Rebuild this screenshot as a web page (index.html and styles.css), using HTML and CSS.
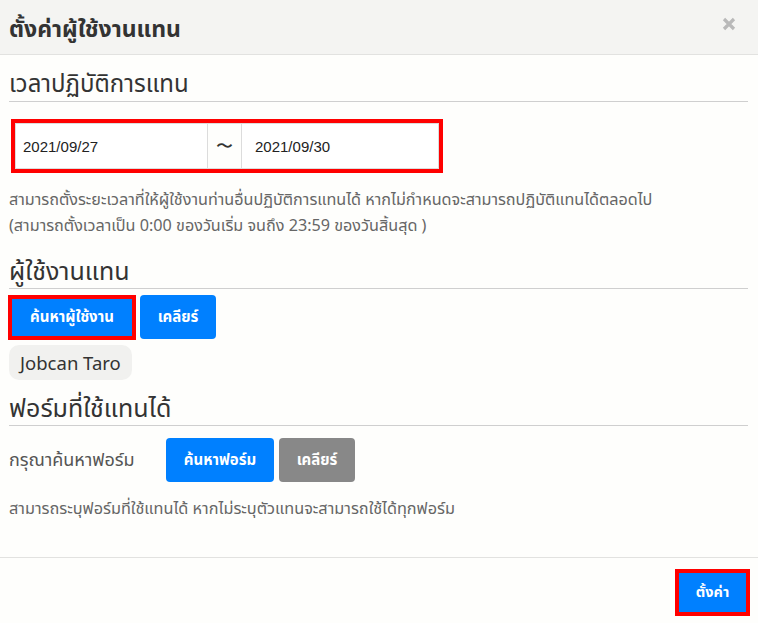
FILE: index.html
```html
<!DOCTYPE html>
<html lang="th">
<head>
<meta charset="utf-8">
<title>ตั้งค่าผู้ใช้งานแทน</title>
<link rel="stylesheet" href="styles.css">
</head>
<body>
<div class="modal">
  <div class="modal-header">
    <h1 class="modal-title">ตั้งค่าผู้ใช้งานแทน</h1>
    <span class="close" aria-label="close">
      <svg width="14" height="14" viewBox="0 0 14 14"><path d="M2 2 L12 12 M12 2 L2 12" stroke="#b9b9b9" stroke-width="3.2" stroke-linecap="butt"/></svg>
    </span>
  </div>
  <div class="modal-body">
    <h2 class="section-title first">เวลาปฏิบัติการแทน</h2>
    <div class="date-group highlight">
      <div class="date-input date-start">2021/09/27</div>
      <div class="date-addon">〜</div>
      <div class="date-input date-end">2021/09/30</div>
    </div>
    <p class="help">สามารถตั้งระยะเวลาที่ให้ผู้ใช้งานท่านอื่นปฏิบัติการแทนได้ หากไม่กำหนดจะสามารถปฏิบัติแทนได้ตลอดไป<br>(สามารถตั้งเวลาเป็น 0:00 ของวันเริ่ม จนถึง 23:59 ของวันสิ้นสุด )</p>

    <h2 class="section-title second">ผู้ใช้งานแทน</h2>
    <div class="btn-row">
      <button class="btn btn-primary btn-user highlight-in">ค้นหาผู้ใช้งาน</button>
      <button class="btn btn-primary btn-clear">เคลียร์</button>
    </div>
    <div class="chip">Jobcan Taro</div>

    <h2 class="section-title third">ฟอร์มที่ใช้แทนได้</h2>
    <div class="form-row">
      <span class="form-label">กรุณาค้นหาฟอร์ม</span>
      <button class="btn btn-primary btn-form">ค้นหาฟอร์ม</button>
      <button class="btn btn-gray btn-clear">เคลียร์</button>
    </div>
    <p class="help single">สามารถระบุฟอร์มที่ใช้แทนได้ หากไม่ระบุตัวแทนจะสามารถใช้ได้ทุกฟอร์ม</p>
  </div>
  <div class="modal-footer">
    <button class="btn btn-primary btn-save highlight-in">ตั้งค่า</button>
  </div>
</div>
</body>
</html>
```

FILE: styles.css
```css
* { box-sizing: border-box; }
html, body { margin: 0; padding: 0; }
body {
  background: #fefefc;
  font-family: "Noto Sans", "Noto Sans Thai", "DejaVu Sans", sans-serif;
  color: #333;
}
.modal {
  width: 758px;
  height: 623px;
  display: flex;
  flex-direction: column;
}
.modal-header {
  height: 55px;
  background: #f4f4f2;
  border-bottom: 1px solid #e2e2e0;
  display: flex;
  align-items: center;
  justify-content: space-between;
  padding: 0 22px 0 9px;
}
.modal-title {
  margin: 0;
  font-size: 23px;
  font-weight: bold;
  color: #333;
  line-height: 30px;
  margin-top: 2px;
}
.close { display: flex; margin-top: -6px; }
.modal-body {
  flex: 1;
  padding: 0 10px 0 9px;
}
.section-title {
  margin: 10px 0 0;
  font-size: 24px;
  font-weight: normal;
  line-height: 32px;
  padding-bottom: 2px;
  border-bottom: 1px solid #cfcfcf;
  color: #333;
  white-space: nowrap;
}
.section-title.first { margin-top: 12px; }
.section-title.second { margin-top: 16px; font-size: 25px; }
.section-title.third { margin-top: 11px; font-size: 25px; }
.date-group {
  margin: 21px 0 0 6px;
  width: 424px;
  height: 46px;
  display: flex;
  border: 1px solid #dcdcdc;
  background: #fff;
}
.highlight { outline: 4px solid #ff0000; }
.date-input {
  display: flex;
  align-items: center;
  padding-left: 7px;
  font-size: 15px;
  color: #222;
  font-family: "Liberation Sans", Arial, sans-serif;
}
.date-start { width: 192px; border-right: 1px solid #dcdcdc; }
.date-addon {
  width: 34px;
  border-right: 1px solid #dcdcdc;
  display: flex;
  align-items: center;
  justify-content: center;
  font-size: 17px;
  color: #333;
  background: #fefefc;
}
.date-end { flex: 1; padding-left: 13px; }
.help {
  margin: 17px 0 0;
  font-size: 16.2px;
  line-height: 26px;
  color: #666;
  white-space: nowrap;
}
.help.single { margin-top: 13px; font-size: 16.3px; }
.btn-row {
  display: flex;
  gap: 4px;
  margin-top: 6px;
  margin-left: -1px;
}
.btn {
  border: none;
  border-radius: 4px;
  font-family: inherit;
  font-size: 15px;
  font-weight: bold;
  color: #fff;
  cursor: pointer;
  padding: 0;
}
.btn-primary { background: #0080ff; }
.btn-gray { background: #888; }
.btn-user { width: 128px; height: 45px; border-radius: 0; }
.highlight-in { box-shadow: inset 0 0 0 4px #ff0000; }
.btn-clear { width: 76px; height: 44px; }
.chip {
  display: inline-block;
  margin-top: 5px;
  height: 35px;
  line-height: 35px;
  padding: 0 11px;
  font-size: 18.5px;
  background: #f1f1ef;
  border-radius: 10px;
  color: #333;
}
.form-row {
  display: flex;
  align-items: center;
  margin-top: 12px;
}
.form-label {
  width: 157px;
  font-size: 18px;
  color: #555;
  white-space: nowrap;
}
.btn-form { width: 108px; height: 44px; margin-right: 5px; }
.modal-footer {
  height: 66px;
  border-top: 1px solid #e2e2e0;
  display: flex;
  justify-content: flex-end;
  align-items: flex-start;
  padding: 11px 8px 0 0;
}
.btn-save { width: 75px; height: 47px; border-radius: 0; font-size: 14.5px; }
```
